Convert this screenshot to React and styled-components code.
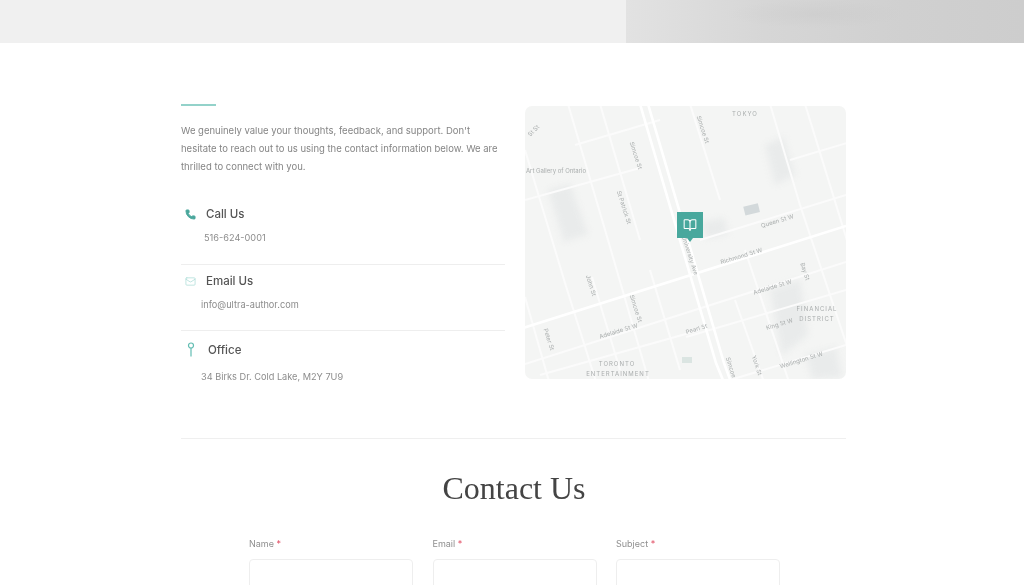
import React from 'react'
import styled, { createGlobalStyle } from 'styled-components'
import { Phone, Mail, BookOpen } from 'lucide-react'

const GlobalStyle = createGlobalStyle`
  html, body {
    margin: 0;
    height: 585px;
    overflow: hidden;
    background: #fff;
    font-family: "Inter", "Liberation Sans", sans-serif;
  }
`

const minorRoads = [
  'M525 150L565 283L597 385', 'M568 104L608 240L650 385', 'M600 104L640 240',
  'M525 297L550 385', 'M592 277L620 370', 'M770 104L800 205L860 385',
  'M805 104L850 250', 'M745 250L790 385', 'M690 104L720 200', 'M650 270L680 370',
  'M735 300L765 385', 'M525 200L640 168', 'M575 145L660 120', 'M790 160L850 142',
  'M525 364L846 262', 'M540 375L700 330', 'M686 337L846 290', 'M730 380L846 345',
  'M700 240L846 195',
]

const majorRoads = [
  'M640 104L716 363L725 385', 'M648 104L724 363L732 385',
  'M523 328L846 226',
]

const mapBlobs = [
  'M548 190l22-6 18 50-24 8z',
  'M765 145l18-8 12 38-20 10z',
  'M770 290l30-10 8 55-26 20z',
  'M806 355l30-8 6 30-30 2z',
  'M700 222l24-4 4 16-22 4z',
]

const mapLabels = [
  { x: 745, y: 116, text: 'TOKYO', spaced: true },
  { x: 535, y: 132, text: 'St St', rotate: -45 },
  { x: 556, y: 173, text: 'Art Gallery of Ontario' },
  { x: 634, y: 156, text: 'Simcoe St', rotate: 72 },
  { x: 622, y: 208, text: 'St Patrick St', rotate: 72 },
  { x: 701, y: 130, text: 'Simcoe St', rotate: 72 },
  { x: 778, y: 223, text: 'Queen St W', rotate: -17 },
  { x: 742, y: 258, text: 'Richmond St W', rotate: -17 },
  { x: 773, y: 289, text: 'Adelaide St W', rotate: -17 },
  { x: 619, y: 333, text: 'Adelaide St W', rotate: -17 },
  { x: 589, y: 286, text: 'John St', rotate: 72 },
  { x: 634, y: 309, text: 'Simcoe St', rotate: 72 },
  { x: 547, y: 340, text: 'Peter St', rotate: 72 },
  { x: 697, y: 331, text: 'Pearl St', rotate: -17 },
  { x: 780, y: 326, text: 'King St W', rotate: -17 },
  { x: 803, y: 272, text: 'Bay St', rotate: 72 },
  { x: 755, y: 366, text: 'York St', rotate: 72 },
  { x: 729, y: 368, text: 'Simcoe', rotate: 72 },
  { x: 802, y: 362, text: 'Wellington St W', rotate: -17 },
  { x: 688, y: 256, text: 'University Ave', rotate: 72 },
  { x: 617, y: 366, text: 'TORONTO', spaced: true },
  { x: 618, y: 376, text: 'ENTERTAINMENT', spaced: true },
  { x: 817, y: 311, text: 'FINANCIAL', spaced: true },
  { x: 817, y: 321, text: 'DISTRICT', spaced: true },
]

const contactItems = [
  { title: 'Call Us', detail: '516-624-0001', kind: 'phone', iconLeft: 4, titleGap: 10, indent: 23, titleTop: 0, detailTop: 10, height: 59 },
  { title: 'Email Us', detail: 'info@ultra-author.com', kind: 'mail', iconLeft: 4, titleGap: 10, indent: 20, titleTop: 8, detailTop: 10, height: 66 },
  { title: 'Office', detail: '34 Birks Dr. Cold Lake, M2Y 7U9', kind: 'pin', iconLeft: 4, titleGap: 12, indent: 20, titleTop: 11, detailTop: 13, height: 60 },
]

function PinIcon() {
  return (
    <svg width="10" height="16" viewBox="0 0 10 16" fill="none" stroke="#62bdb2" strokeWidth="1.2">
      <circle cx="5" cy="3.5" r="2.5" />
      <path d="M5 6v8.5" />
    </svg>
  )
}

function ItemIcon({ kind }) {
  if (kind === 'phone') return <Phone size={11} color="#4aa79c" strokeWidth={2} fill="#4aa79c" />
  if (kind === 'mail') return <Mail size={11} color="#a5d9d3" strokeWidth={1.5} />
  return <PinIcon />
}

function MapDrawing() {
  return (
    <MapSvg viewBox="525 106 321 273" width="321" height="273">
      <rect x="525" y="106" width="321" height="273" fill="#f4f5f4" />
      {mapBlobs.map((d) => <MapBlob key={d} d={d} />)}
      <rect x="744" y="205" width="15" height="9" fill="#d3d9db" transform="rotate(-14 751 209)" />
      <rect x="682" y="357" width="10" height="6" fill="#dbe5e2" />
      {minorRoads.map((d) => <path key={d} d={d} stroke="#fbfbfb" strokeWidth="2" fill="none" />)}
      {majorRoads.map((d) => <path key={d} d={d} stroke="#ffffff" strokeWidth="2.6" fill="none" />)}
      {mapLabels.map((l) => (
        <MapLabel
          key={l.text + l.x}
          x={l.x}
          y={l.y}
          $spaced={l.spaced}
          textAnchor="middle"
          transform={l.rotate ? `rotate(${l.rotate} ${l.x} ${l.y})` : undefined}
        >
          {l.text}
        </MapLabel>
      ))}
    </MapSvg>
  )
}

function App() {
  return (
    <Page>
      <GlobalStyle />
      <Hero>
        <HeroLeft />
        <HeroRight />
      </Hero>
      <Content>
        <InfoGrid>
          <InfoColumn>
            <Accent />
            <Intro>
              We genuinely value your thoughts, feedback, and support. Don't hesitate to reach out to us using the contact information below. We are thrilled to connect with you.
            </Intro>
            <ItemList>
              {contactItems.map((item, i) => (
                <Item key={item.title} $height={item.height} $divider={i < contactItems.length - 1}>
                  <ItemHead $top={item.titleTop} $left={item.iconLeft} $gap={item.titleGap}>
                    <IconSlot><ItemIcon kind={item.kind} /></IconSlot>
                    <ItemTitle>{item.title}</ItemTitle>
                  </ItemHead>
                  <ItemDetail $indent={item.indent} $top={item.detailTop}>{item.detail}</ItemDetail>
                </Item>
              ))}
            </ItemList>
          </InfoColumn>
          <MapBox>
            <MapDrawing />
            <Marker>
              <BookOpen size={14} color="#fff" strokeWidth={1.8} />
            </Marker>
          </MapBox>
        </InfoGrid>
        <Heading>Contact Us</Heading>
        <FormRow>
          {['Name', 'Email', 'Subject'].map((name) => (
            <Field key={name}>
              <FieldLabel>{name} <Required>*</Required></FieldLabel>
              <Input type="text" aria-label={name} />
            </Field>
          ))}
        </FormRow>
      </Content>
    </Page>
  )
}

export default App

const Page = styled.div`
  width: 1024px;
  height: 585px;
  overflow: hidden;
  filter: blur(0.6px);
`

const Hero = styled.div`
  display: flex;
  height: 43px;
`

const HeroLeft = styled.div`
  width: 626px;
  background: #f0f0f0;
`

const HeroRight = styled.div`
  flex: 1;
  background:
    radial-gradient(ellipse 90px 14px at 190px 14px, rgba(190, 190, 190, 0.22), transparent),
    linear-gradient(90deg, #e2e2e2 0%, #d6d6d6 35%, #d0d0d0 70%, #cdcdcd 100%);
`

const Content = styled.div`
  width: 665px;
  margin-left: 181px;
  padding-top: 61px;
`

const InfoGrid = styled.div`
  display: grid;
  grid-template-columns: 324px 321px;
  column-gap: 20px;
  height: 334px;
  border-bottom: 1px solid #efefef;
`

const InfoColumn = styled.div`
  display: flex;
  flex-direction: column;
`

const Accent = styled.div`
  width: 35px;
  height: 2px;
  background: #93d2ca;
`

const Intro = styled.p`
  margin: 16px 0 0;
  font-size: 9.5px;
  line-height: 18px;
  color: #858585;
`

const ItemList = styled.div`
  margin-top: 30px;
  display: flex;
  flex-direction: column;
`

const Item = styled.div`
  height: ${(p) => p.$height}px;
  box-sizing: border-box;
  border-bottom: ${(p) => (p.$divider ? '1px solid #eeeeee' : 'none')};
`

const ItemHead = styled.div`
  display: flex;
  align-items: center;
  height: 16px;
  padding-top: ${(p) => p.$top}px;
  padding-left: ${(p) => p.$left}px;
  gap: ${(p) => p.$gap}px;
`

const IconSlot = styled.span`
  display: flex;
  justify-content: center;
  width: 11px;
`

const ItemTitle = styled.span`
  font-size: 11.5px;
  font-weight: 500;
  color: #555;
`

const ItemDetail = styled.div`
  margin-top: ${(p) => p.$top}px;
  padding-left: ${(p) => p.$indent}px;
  font-size: 9.2px;
  line-height: 12px;
  color: #8c8c8c;
`

const MapBox = styled.div`
  position: relative;
  margin-top: 2px;
  width: 321px;
  height: 273px;
  border-radius: 7px;
  overflow: hidden;
`

const MapSvg = styled.svg`
  display: block;
`

const MapBlob = styled.path`
  fill: #e9ebeb;
  filter: blur(3px);
`

const MapLabel = styled.text`
  font-family: "Inter", "Liberation Sans", sans-serif;
  font-size: 6px;
  fill: #a9adad;
  letter-spacing: ${(p) => (p.$spaced ? '1px' : '0')};
`

const Marker = styled.div`
  position: absolute;
  left: 152px;
  top: 106px;
  width: 26px;
  height: 26px;
  display: flex;
  align-items: center;
  justify-content: center;
  background: #48a89d;

  &::after {
    content: '';
    position: absolute;
    left: 10px;
    top: 26px;
    border-left: 3px solid transparent;
    border-right: 3px solid transparent;
    border-top: 4px solid #48a89d;
  }
`

const Heading = styled.h2`
  margin: 31px 0 0;
  text-align: center;
  width: 666px;
  font-family: "Liberation Serif", serif;
  font-weight: 400;
  font-size: 32px;
  line-height: 36px;
  color: #444;
`

const FormRow = styled.div`
  display: grid;
  grid-template-columns: repeat(3, 164px);
  column-gap: 19.5px;
  margin: 32px 0 0 68px;
`

const Field = styled.div`
  display: flex;
  flex-direction: column;
  gap: 9px;
`

const FieldLabel = styled.label`
  font-size: 9px;
  line-height: 12px;
  color: #8f8f8f;
`

const Required = styled.span`
  color: #e0485f;
`

const Input = styled.input`
  box-sizing: border-box;
  width: 164px;
  height: 34px;
  border: 1px solid #eeeeee;
  border-radius: 4px;
  background: #fff;
`
